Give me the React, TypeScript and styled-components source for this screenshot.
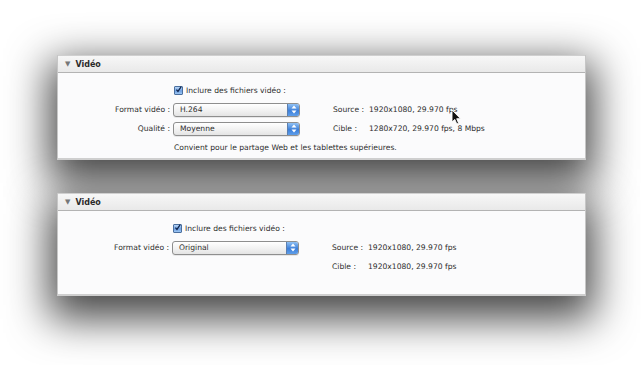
import { FC } from 'react'
import styled, { createGlobalStyle } from 'styled-components'

const GlobalStyle = createGlobalStyle`
	html, body {
		margin: 0;
		background: #ffffff;
	}
	body {
		font-family: "DejaVu Sans", "Liberation Sans", sans-serif;
		font-size: 7.6px;
		color: #2e2e2e;
	}
`

type Info = { label: string; value: string }

const Checkbox: FC = () => (
	<CheckBox>
		<svg width='9' height='9' viewBox='0 0 9 9'>
			<path d='M1.8 4.6 L3.8 7 L8 0.8' fill='none' stroke='#10264f' strokeWidth='1.6' />
		</svg>
	</CheckBox>
)

const Popup: FC<{ value: string }> = ({ value }) => (
	<PopupBox>
		<span>{value}</span>
		<Stepper>
			<svg width='6' height='9' viewBox='0 0 6 9'>
				<path d='M3 0.5 L5.5 3.5 L0.5 3.5 Z M3 8.5 L5.5 5.5 L0.5 5.5 Z' fill='#ffffff' />
			</svg>
		</Stepper>
	</PopupBox>
)

const Cursor: FC = () => (
	<CursorSpot>
		<svg width='11' height='16' viewBox='0 0 11 16'>
			<path
				d='M1 1 L1 13 L3.8 10.4 L5.8 15 L7.6 14.2 L5.7 9.7 L9.5 9.7 Z'
				fill='#111'
				stroke='#fff'
				strokeWidth='0.9'
			/>
		</svg>
	</CursorSpot>
)

const InfoCell: FC<{ info?: Info }> = ({ info }) => (
	<InfoLine>{info && <><InfoLabel>{info.label}</InfoLabel><span>{info.value}</span></>}</InfoLine>
)

const App: FC = () => {
	return (
		<>
			<GlobalStyle />
			<Stack>
				<Panel>
					<Header>
						<Disclosure>▼</Disclosure>
						<Title>Vidéo</Title>
					</Header>
					<Body labelWidth={115} bottom={1}>
						<Row>
							<span />
							<CheckLine>
								<Checkbox />
								Inclure des fichiers vidéo :
							</CheckLine>
						</Row>
						<Row>
							<Label>Format vidéo :</Label>
							<Popup value='H.264' />
							<InfoCell info={{ label: 'Source :', value: '1920x1080, 29.970 fps' }} />
						</Row>
						<Row>
							<Label>Qualité :</Label>
							<Popup value='Moyenne' />
							<InfoCell info={{ label: 'Cible :', value: '1280x720, 29.970 fps, 8 Mbps' }} />
						</Row>
						<Row>
							<span />
							<Note>Convient pour le partage Web et les tablettes supérieures.</Note>
						</Row>
					</Body>
					<Cursor />
				</Panel>

				<Panel>
					<Header>
						<Disclosure>▼</Disclosure>
						<Title>Vidéo</Title>
					</Header>
					<Body labelWidth={114} bottom={18}>
						<Row>
							<span />
							<CheckLine>
								<Checkbox />
								Inclure des fichiers vidéo :
							</CheckLine>
						</Row>
						<Row>
							<Label>Format vidéo :</Label>
							<Popup value='Original' />
							<InfoCell info={{ label: 'Source :', value: '1920x1080, 29.970 fps' }} />
						</Row>
						<Row>
							<span />
							<span />
							<InfoCell info={{ label: 'Cible :', value: '1920x1080, 29.970 fps' }} />
						</Row>
					</Body>
				</Panel>
			</Stack>
		</>
	)
}

const Stack = styled.div`
	position: relative;
	z-index: 0;
	box-sizing: border-box;
	min-height: 365px;
	display: flex;
	flex-direction: column;
	align-items: flex-start;
	gap: 33px;
	padding: 55px 0 0 57px;
	overflow: hidden;
`
const Panel = styled.section`
	position: relative;
	width: 527px;
	background: #fbfbfc;
	border: 1px solid #c6c6c6;
	border-top: none;
	border-bottom: 2px solid #cfcfcf;
	&::before {
		content: '';
		position: absolute;
		inset: 0;
		z-index: -1;
		box-shadow: 0 16px 42px 9px rgba(0, 0, 0, 0.72);
	}
`
const Header = styled.header`
	display: flex;
	align-items: center;
	gap: 5px;
	height: 16px;
	padding-left: 7px;
	background: linear-gradient(#f7f7f7, #e9e9e9);
	border-top: 1px solid #cfcfcf;
	border-bottom: 1px solid #b3b3b3;
`
const Disclosure = styled.span`
	font-size: 7px;
	color: #777;
`
const Title = styled.span`
	font-weight: bold;
	font-size: 8px;
	color: #2a2a2a;
`
const Body = styled.div<{ labelWidth: number; bottom: number }>`
	display: grid;
	grid-template-columns: ${(p) => p.labelWidth}px 127px 1fr;
	grid-auto-rows: 19px;
	padding: 8px 0 ${(p) => p.bottom}px 0;
`
const Row = styled.div`
	display: contents;
	& > * {
		align-self: center;
	}
`
const Label = styled.span`
	text-align: right;
	padding-right: 3px;
`
const CheckLine = styled.label`
	grid-column: 2 / 4;
	display: flex;
	align-items: center;
	gap: 3px;
	padding-left: 1px;
`
const CheckBox = styled.span`
	display: inline-flex;
	width: 9px;
	height: 9px;
	border: 1px solid #4b6f9e;
	border-radius: 1px;
	background: linear-gradient(#b9d6f7, #6e9fe0 55%, #9cc6f3);
	box-sizing: border-box;
	overflow: visible;
	svg {
		margin: -2px 0 0 0;
	}
`
const PopupBox = styled.div`
	display: flex;
	align-items: center;
	justify-content: space-between;
	height: 12px;
	border: 1px solid #8e8e8e;
	border-radius: 3px;
	background: linear-gradient(#ffffff, #f0f0f0 60%, #e4e4e4);
	box-shadow: 0 1px 0 rgba(0, 0, 0, 0.08);
	overflow: hidden;
	span {
		padding-left: 6px;
	}
`
const Stepper = styled.div`
	display: flex;
	align-items: center;
	justify-content: center;
	width: 11px;
	height: 100%;
	background: linear-gradient(#8fc0f4, #3d7fd9 55%, #5e9eea);
	border-left: 1px solid #5b7fb0;
`
const InfoLine = styled.div`
	display: flex;
	padding-left: 33px;
`
const InfoLabel = styled.span`
	width: 36px;
	flex: none;
`
const Note = styled.span`
	grid-column: 2 / 4;
	padding-left: 1px;
`
const CursorSpot = styled.span`
	position: absolute;
	left: 393px;
	top: 54px;
	line-height: 0;
`

export default App
